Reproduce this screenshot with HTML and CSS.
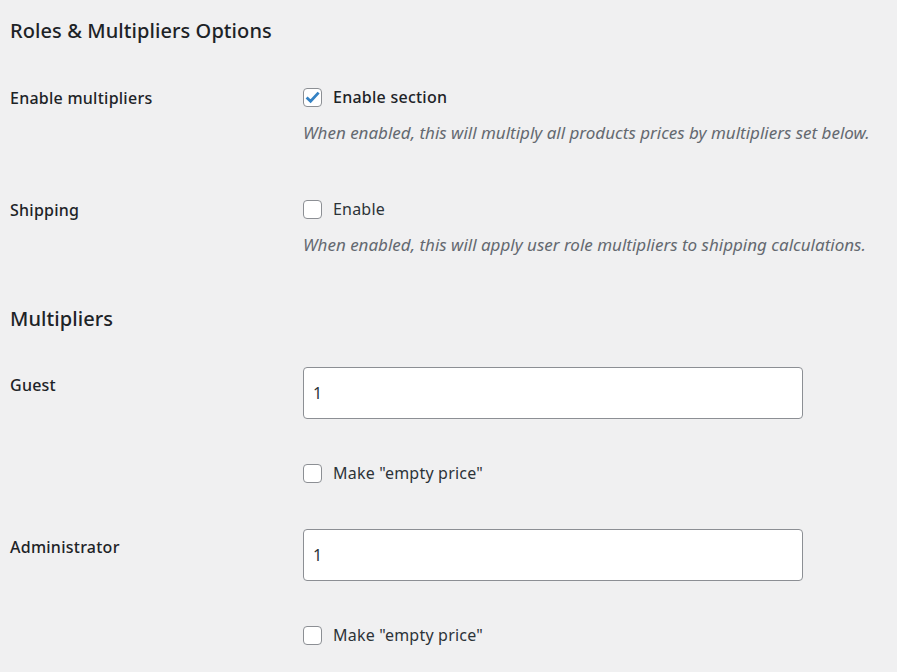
FILE: index.html
```html
<!DOCTYPE html>
<html lang="en">
<head>
<meta charset="utf-8">
<title>Roles &amp; Multipliers Options</title>
<link rel="stylesheet" href="styles.css">
</head>
<body>
<div class="wrap">
  <h2 class="title title-first">Roles &amp; Multipliers Options</h2>

  <div class="row row-first">
    <div class="label">Enable multipliers</div>
    <div class="field">
      <label class="check-line">
        <span class="box checked">
          <svg viewBox="0 0 19 19" width="19" height="19"><polyline points="3.6,9.4 7.6,13.2 15.6,4.6" fill="none" stroke="#3582c4" stroke-width="2.8"/></svg>
        </span>
        <span class="check-text strong">Enable section</span>
      </label>
      <p class="desc">When enabled, this will multiply all products prices by multipliers set below.</p>
    </div>
  </div>

  <div class="row row-second">
    <div class="label">Shipping</div>
    <div class="field">
      <label class="check-line">
        <span class="box"></span>
        <span class="check-text">Enable</span>
      </label>
      <p class="desc">When enabled, this will apply user role multipliers to shipping calculations.</p>
    </div>
  </div>

  <h2 class="title title-second">Multipliers</h2>

  <div class="row row-guest">
    <div class="label label-input">Guest</div>
    <div class="field">
      <div class="input">1</div>
      <label class="check-line check-after-input">
        <span class="box"></span>
        <span class="check-text">Make "empty price"</span>
      </label>
    </div>
  </div>

  <div class="row row-admin">
    <div class="label label-input">Administrator</div>
    <div class="field">
      <div class="input">1</div>
      <label class="check-line check-after-input">
        <span class="box"></span>
        <span class="check-text">Make "empty price"</span>
      </label>
    </div>
  </div>
</div>
</body>
</html>
```
FILE: styles.css
```css
html, body {
  margin: 0;
  padding: 0;
  background: #f0f0f1;
}
body {
  font-family: "Noto Sans", "Open Sans", sans-serif;
  color: #1d2327;
  font-size: 16px;
}
.wrap {
  padding: 0 10px;
}
.title {
  margin: 0;
  font-size: 20px;
  font-weight: 500;
  line-height: 28px;
  height: 28px;
  letter-spacing: 0.08px;
}
.title-first { margin-top: 17px; }
.title-second { margin-top: 48px; }
.row {
  display: grid;
  grid-template-columns: 293px 1fr;
}
.row-first { margin-top: 40px; }
.row-second { margin-top: 52px; }
.row-guest { margin-top: 34px; }
.row-admin { margin-top: 44px; }
.label {
  font-weight: 500;
  line-height: 24px;
  padding-top: 1px;
  letter-spacing: 0.25px;
}
.label-input { padding-top: 6px; }
.field {
  display: flex;
  flex-direction: column;
  align-items: flex-start;
}
.check-line {
  display: flex;
  align-items: center;
  height: 24px;
  gap: 11px;
}
.box {
  box-sizing: border-box;
  width: 19px;
  height: 19px;
  border: 1px solid #8c8f94;
  border-radius: 4px;
  background: #fff;
  position: relative;
}
.box svg {
  display: block;
  position: absolute;
  left: -1px;
  top: -1px;
}
.check-text {
  line-height: 24px;
  color: #2c3338;
  letter-spacing: 0.2px;
}
.check-text.strong {
  font-weight: 500;
  color: #1d2327;
  letter-spacing: 0.25px;
}
.desc {
  margin: 12px 0 0;
  line-height: 24px;
  font-size: 17px;
  font-style: italic;
  color: #646970;
}
.input {
  box-sizing: border-box;
  width: 500px;
  height: 52px;
  border: 1px solid #8c8f94;
  border-radius: 4px;
  background: #fff;
  padding: 0 9px;
  line-height: 50px;
  color: #2c3338;
}
.check-after-input { margin-top: 42px; }
```
